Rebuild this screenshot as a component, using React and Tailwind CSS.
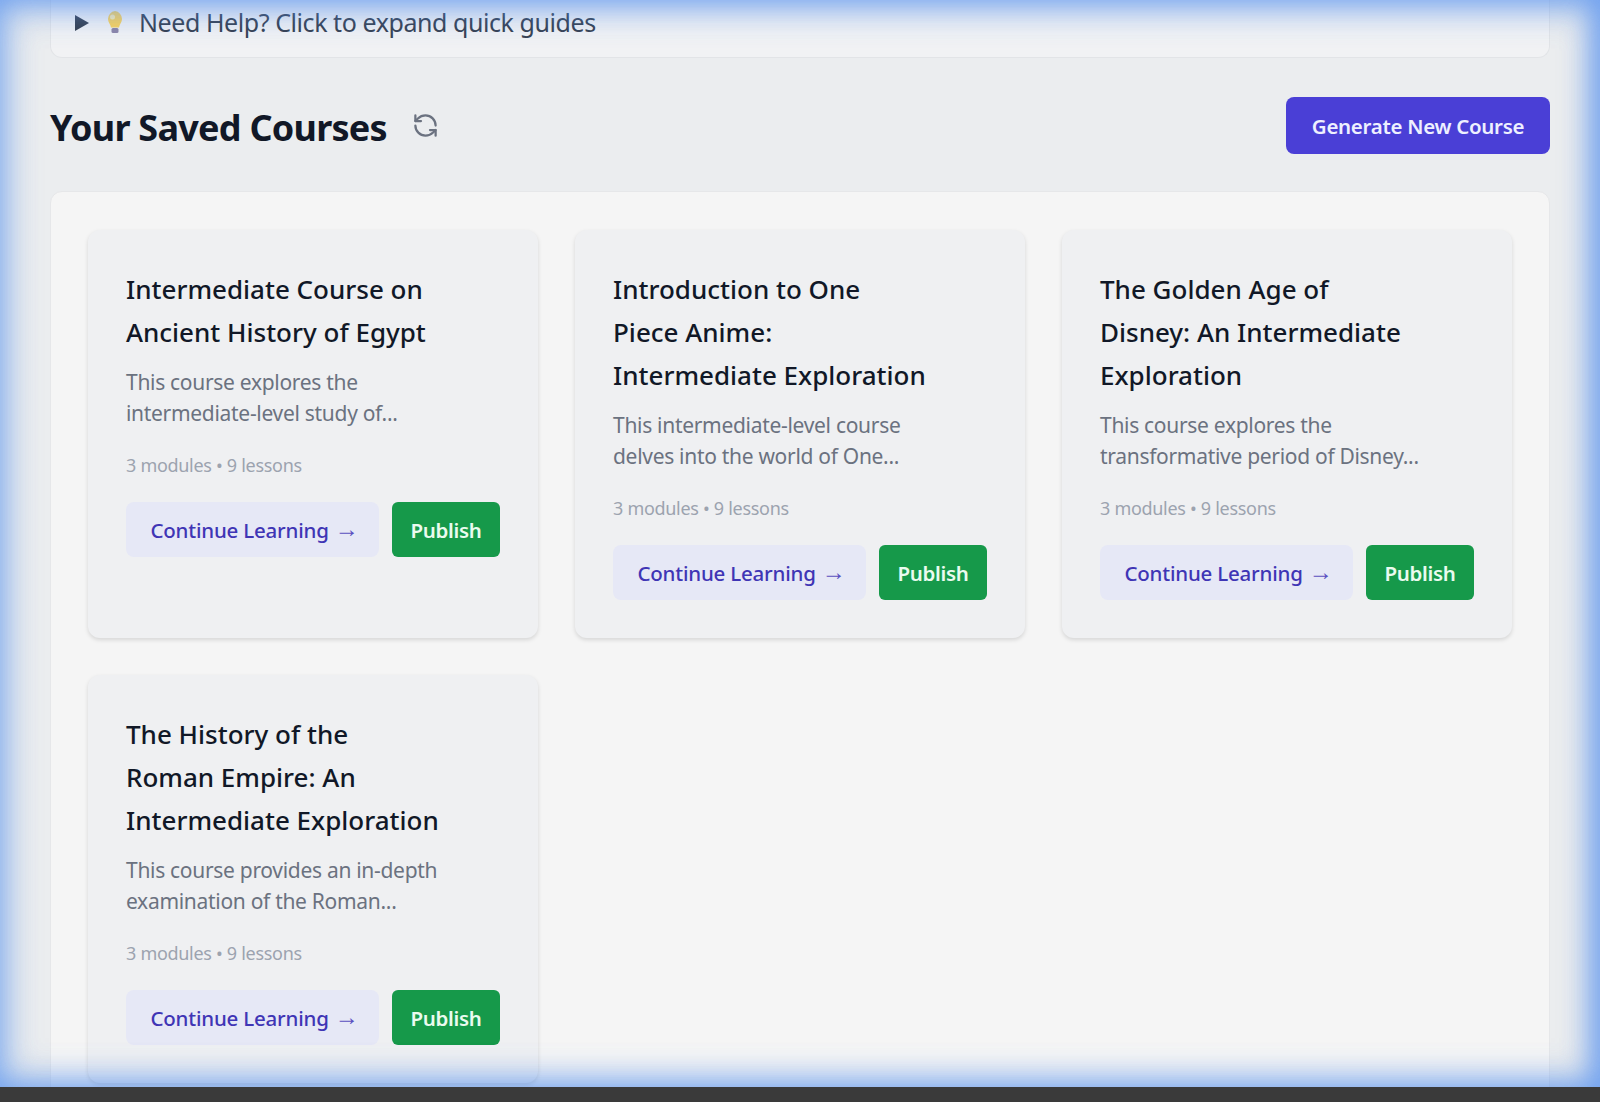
import React from "react";
import { RefreshCcw } from "lucide-react";

const courses = [
  [["Intermediate Course on", "Ancient History of Egypt"], ["This course explores the", "intermediate-level study of..."]],
  [["Introduction to One", "Piece Anime:", "Intermediate Exploration"], ["This intermediate-level course", "delves into the world of One..."]],
  [["The Golden Age of", "Disney: An Intermediate", "Exploration"], ["This course explores the", "transformative period of Disney..."]],
  [["The History of the", "Roman Empire: An", "Intermediate Exploration"], ["This course provides an in-depth", "examination of the Roman..."]],
];

function Card({ title, desc }) {
  return (
    <div className="rounded-xl bg-[#eff0f2] p-[38px] shadow-[0_2px_4px_rgba(0,0,0,0.13)]">
      <h3 className="text-[26px] leading-[43px] font-medium text-[#111827] whitespace-nowrap">
        {title.map((t) => <div key={t}>{t}</div>)}
      </h3>
      <p className="mt-[13px] text-[21px] leading-[31px] text-[#6b7280] tracking-[-0.3px] whitespace-nowrap">
        {desc.map((t) => <span key={t} className="block">{t}</span>)}
      </p>
      <p className="mt-[21px] text-[18px] leading-[31px] text-[#9ca3af] tracking-[-0.3px]">3 modules • 9 lessons</p>
      <div className="mt-[21px] flex gap-[13px]">
        <button className="flex h-[55px] w-[253px] items-center justify-center gap-[6px] rounded-lg bg-[#e6e8f6] pt-[1px] pl-[4px] text-[20.5px] font-medium text-[#3f35b5] tracking-[-0.2px] whitespace-nowrap">
          <span>Continue Learning</span>
          <span className="mb-[3px] font-['Liberation_Sans'] text-[24px] leading-none font-normal text-[#5a50c0]">→</span>
        </button>
        <button className="h-[55px] w-[108px] rounded-md bg-[#16994a] pt-[1px] text-[20.5px] font-semibold text-[#eafbef] tracking-[-0.3px]">Publish</button>
      </div>
    </div>
  );
}

export default function App() {
  return (
    <div className="relative flex h-[1102px] flex-col overflow-hidden bg-[#ebedef] font-['Noto_Sans','Liberation_Sans',sans-serif]">
      <div className="relative h-[1087px] overflow-hidden px-[50px]">
        <div className="flex h-[58px] items-center gap-[15px] rounded-b-xl border border-t-0 border-[#e2e4e7] bg-[#f1f2f4] pb-[12px] pl-[24px]">
          <svg className="mr-[2px]" width="14" height="16" viewBox="0 0 14 16"><polygon points="0,0 14,8 0,16" fill="#374151" /></svg>
          <svg width="18" height="25" viewBox="0 0 18 25">
            <path d="M9 1a8 8 0 0 0-7 8c0 3.500 2.500 5 3 8.500h8C13.500 14 16 12.500 16 9a8 8 0 0 0-7-8z" fill="#fcd45c" />
            <circle cx="6.500" cy="7" r="2.500" fill="#fdeeb0" />
            <rect x="5.500" y="18" width="7" height="5" rx="1.500" fill="#8d86a8" />
          </svg>
          <span className="text-[25px] leading-none text-[#374151] tracking-[-0.43px]">Need Help? Click to expand quick guides</span>
        </div>
        <div className="mt-[39px] flex h-[57px] items-center justify-between">
          <div className="flex items-center gap-[25px]">
            <h2 className="mt-[4px] text-[36px] font-bold text-[#111827] tracking-[-0.75px]">Your Saved Courses</h2>
            <RefreshCcw size={27} strokeWidth={2} className="text-[#6b7280]" />
          </div>
          <button className="h-[57px] w-[264px] rounded-lg bg-[#4a3fd6] pt-[1px] text-[20.5px] font-semibold text-[#eef0ff] tracking-[-0.3px]">Generate New Course</button>
        </div>
        <div className="mt-[37px] rounded-xl border border-[#e6e7e9] bg-[#f5f5f5] px-[37px] pt-[38px] pb-[37px]">
          <div className="grid grid-cols-3 gap-[37px]">
            {courses.map(([title, desc]) => <Card key={title[0]} title={title} desc={desc} />)}
          </div>
        </div>
        <div className="pointer-events-none absolute inset-0 shadow-[inset_0_0_40px_rgba(90,150,240,0.35),inset_-10px_0_26px_rgba(90,145,240,0.5),inset_0_10px_34px_rgba(100,155,240,0.38),inset_0_-8px_32px_rgba(100,155,240,0.38)]" />
      </div>
      <div className="h-[15px] bg-[#3a3a3a]" />
    </div>
  );
}
